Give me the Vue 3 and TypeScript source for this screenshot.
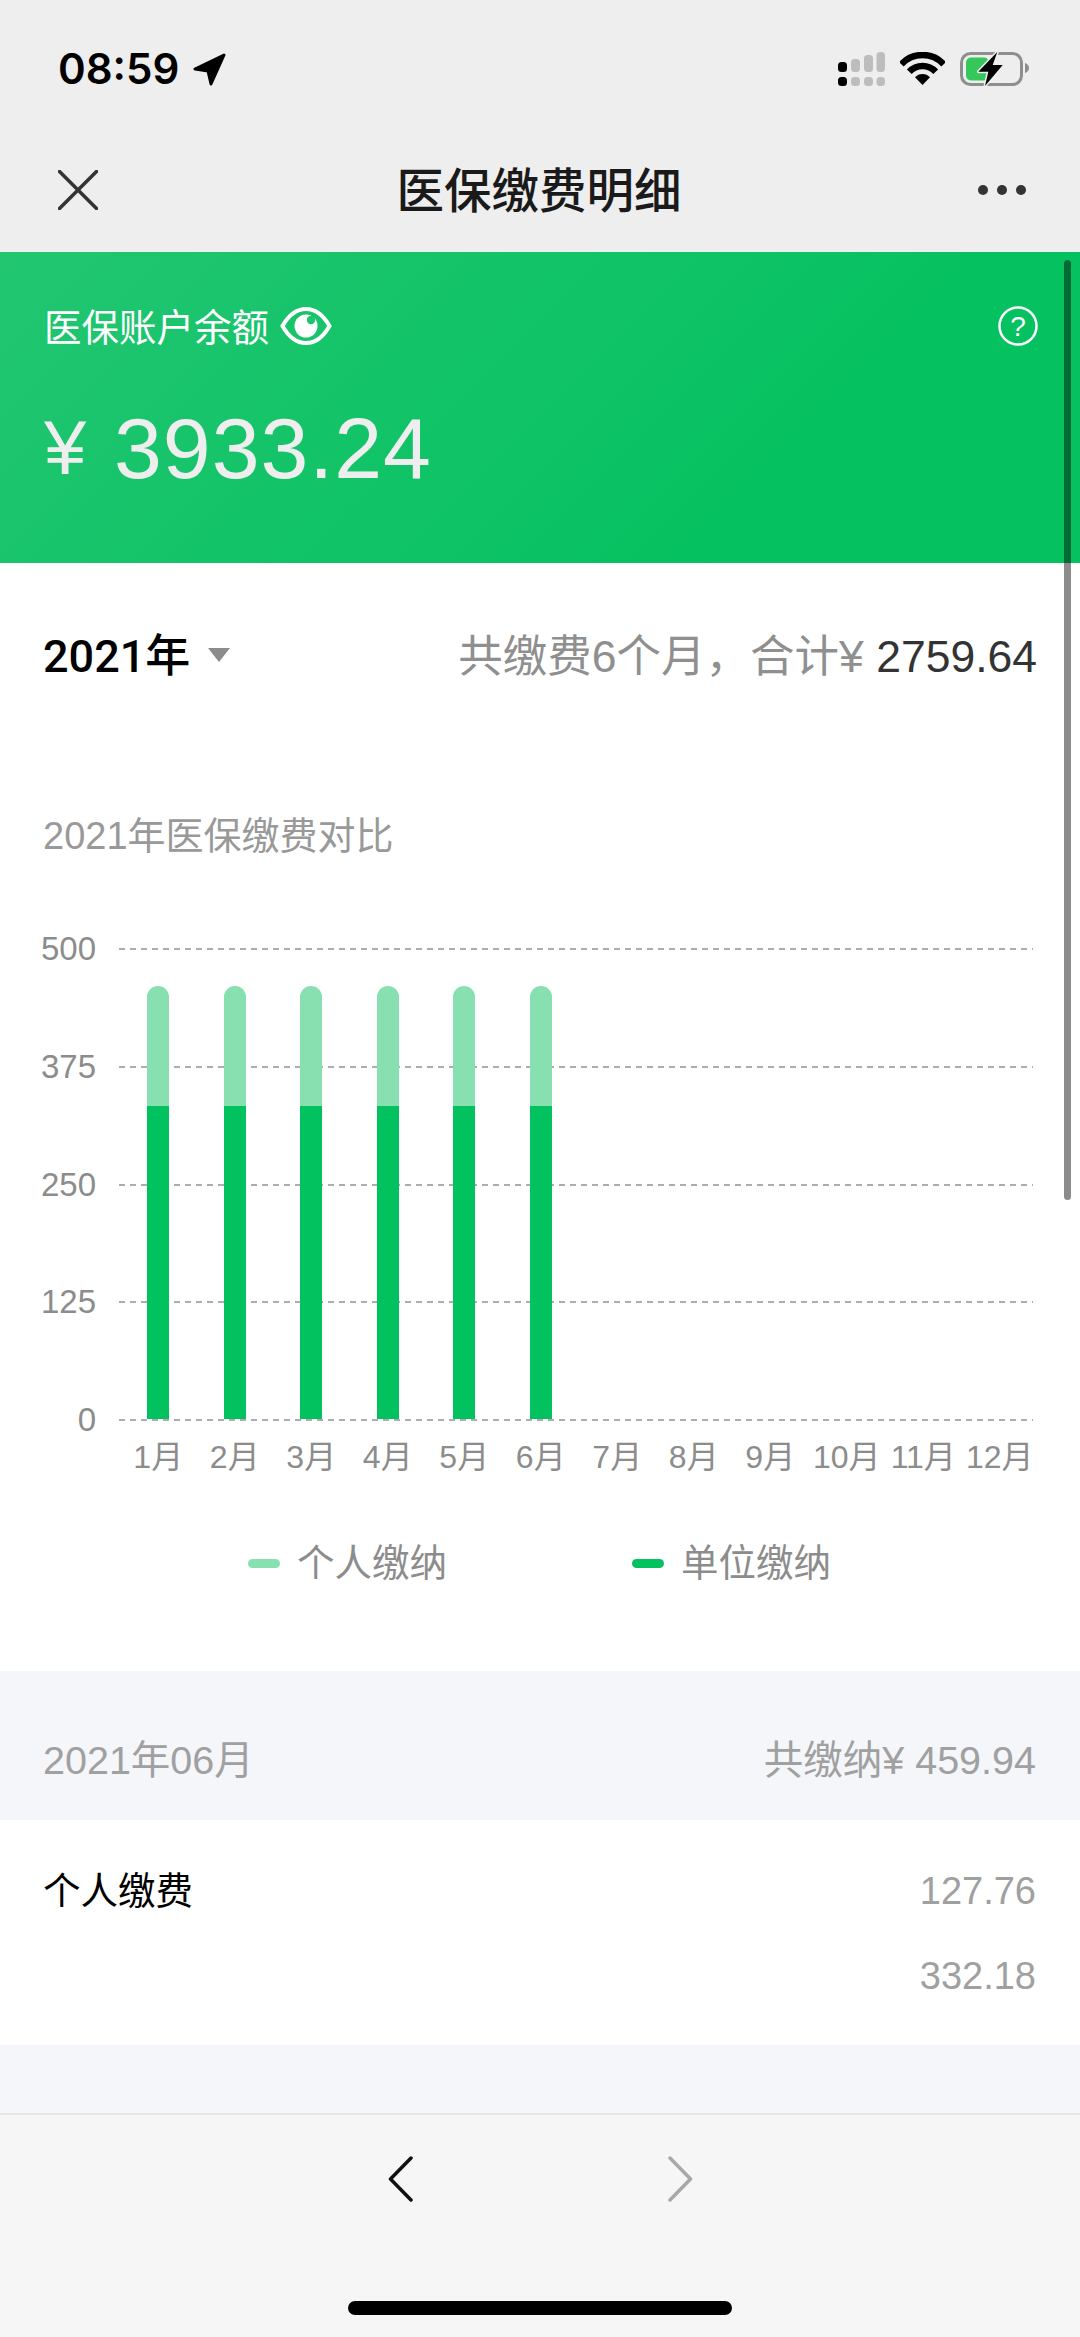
<script setup lang="ts">
interface MonthBar {
  label: string
  personal: number
  company: number
}

const maxValue = 500
const ticks: number[] = [500, 375, 250, 125, 0]
const paid: Record<number, [number, number]> = {
  1: [127.76, 332.18],
  2: [127.76, 332.18],
  3: [127.76, 332.18],
  4: [127.76, 332.18],
  5: [127.76, 332.18],
  6: [127.76, 332.18],
}
const months: MonthBar[] = Array.from({ length: 12 }, (_, i) => {
  const entry = paid[i + 1] ?? [0, 0]
  return { label: `${i + 1}月`, personal: entry[0], company: entry[1] }
})
const pct = (v: number): string => `${(v / maxValue) * 100}%`
</script>

<template>
  <div class="page">
    <header class="top">
      <div class="status">
        <div class="status-left">
          <span class="time">08:59</span>
          <svg class="arrow" width="33" height="33" viewBox="0 0 33 33">
            <path d="M31 2 2 16l13 2 3 13z" fill="#000" stroke="#000" stroke-width="3" stroke-linejoin="round" />
          </svg>
        </div>
        <div class="status-right">
          <svg width="47" height="34" viewBox="0 0 47 34">
            <rect x="0" y="10" width="9" height="10" rx="3.5" fill="#000" />
            <rect x="0" y="25" width="9" height="9" rx="3.5" fill="#000" />
            <rect x="13" y="7" width="9" height="13" rx="3.5" fill="#bdbdbd" />
            <rect x="13" y="25" width="9" height="9" rx="3.5" fill="#bdbdbd" />
            <rect x="26" y="3" width="9" height="17" rx="3.5" fill="#bdbdbd" />
            <rect x="26" y="25" width="9" height="9" rx="3.5" fill="#bdbdbd" />
            <rect x="38.5" y="0" width="8.5" height="20" rx="3.5" fill="#bdbdbd" />
            <rect x="38.5" y="25" width="8.5" height="9" rx="3.5" fill="#bdbdbd" />
          </svg>
          <svg width="45" height="34" viewBox="0 0 45 34">
            <path d="M1.3 12.2A29 29 0 0 1 43.7 12.2M9.3 19.7A18 18 0 0 1 35.7 19.7" fill="none" stroke="#000" stroke-width="6.5" />
            <path d="M22.5 33 15 25.3A10 10 0 0 1 30 25.3Z" fill="#000" />
          </svg>
          <svg width="69" height="34" viewBox="0 0 69 34" overflow="visible">
            <rect x="1.5" y="1.5" width="60" height="31" rx="9" fill="none" stroke="#8e8e8e" stroke-width="3" />
            <rect x="6" y="5.5" width="23" height="23" rx="5" fill="#34c759" />
            <path d="M65 11c2.500.8 4 2.600 4 5s-1.500 4.200-4 5z" fill="#8e8e8e" />
            <path d="M37.300 0 18.300 19.700H28.300L25 34 42.700 13H32.700Z" fill="#000" stroke="#eeeeee" stroke-width="3" paint-order="stroke" stroke-linejoin="round" />
          </svg>
        </div>
      </div>
      <nav class="nav">
        <svg class="close" width="40" height="40" viewBox="0 0 40 40">
          <path d="M1.500 1.500 38.500 38.500M38.500 1.500 1.500 38.500" stroke="#333" stroke-width="3.500" stroke-linecap="round" fill="none" />
        </svg>
        <h1 class="title">医保缴费明细</h1>
        <div class="dots"><i></i><i></i><i></i></div>
      </nav>
    </header>

    <main class="content">
      <section class="hero">
        <div class="hero-top">
          <div class="hero-label">
            <span>医保账户余额</span>
            <svg width="52" height="40" viewBox="0 0 52 40">
              <path d="M2.500 20C9 8.500 17 3 26 3s17 5.500 23.500 17C43 31.500 35 37 26 37S9 31.500 2.500 20Z" fill="none" stroke="#fff" stroke-width="4" />
              <circle cx="26" cy="20" r="11.500" fill="#fff" />
              <circle cx="31" cy="14" r="4.200" fill="#1ec56d" />
            </svg>
          </div>
          <svg class="help" width="40" height="40" viewBox="0 0 40 40">
            <circle cx="20" cy="20" r="18.500" fill="none" stroke="#fff" stroke-width="2.500" />
            <text x="20" y="30" text-anchor="middle" class="help-mark">?</text>
          </svg>
        </div>
        <div class="amount"><span class="yen">¥</span><span class="amount-value">3933.24</span></div>
      </section>

      <section class="overview">
        <div class="summary">
          <div class="year">
            <span>2021年</span>
            <i class="caret"></i>
          </div>
          <div class="total">共缴费6个月，合计¥ <b>2759.64</b></div>
        </div>

        <h2 class="chart-title">2021年医保缴费对比</h2>

        <div class="plot">
          <div class="grid">
            <div v-for="t in ticks" :key="t" class="grid-row">
              <span class="tick">{{ t }}</span>
              <span class="line"></span>
            </div>
          </div>
          <div class="bars">
            <div v-for="m in months" :key="m.label" class="bar-col">
              <div v-if="m.personal" class="bar-light" :style="{ height: pct(m.personal) }"></div>
              <div v-if="m.company" class="bar-dark" :style="{ height: pct(m.company) }"></div>
            </div>
          </div>
        </div>

        <div class="x-axis">
          <span v-for="m in months" :key="m.label">{{ m.label }}</span>
        </div>

        <div class="legend">
          <div class="legend-item"><i class="swatch light"></i>个人缴纳</div>
          <div class="legend-item"><i class="swatch dark"></i>单位缴纳</div>
        </div>
      </section>

      <section class="detail">
        <div class="detail-head">
          <span>2021年06月</span>
          <span>共缴纳¥ 459.94</span>
        </div>
        <div class="detail-body">
          <div class="detail-row">
            <span class="detail-name">个人缴费</span>
            <span>127.76</span>
          </div>
          <div class="detail-row">
            <span class="detail-name"></span>
            <span>332.18</span>
          </div>
        </div>
      </section>
    </main>

    <footer class="toolbar">
      <div class="toolbar-buttons">
        <svg width="25" height="46" viewBox="0 0 25 46">
          <path d="M23 2 2.500 23 23 44" fill="none" stroke="#111" stroke-width="3.500" stroke-linecap="round" stroke-linejoin="round" />
        </svg>
        <svg width="25" height="46" viewBox="0 0 25 46">
          <path d="M2 2 22.500 23 2 44" fill="none" stroke="#a8a8a8" stroke-width="3.500" stroke-linecap="round" stroke-linejoin="round" />
        </svg>
      </div>
      <div class="home"></div>
    </footer>

    <div class="scrollbar"></div>
  </div>
</template>

<style>
html,
body {
  margin: 0;
  padding: 0;
  background: #fff;
}
</style>

<style scoped>
.page {
  position: relative;
  display: flex;
  flex-direction: column;
  width: 1080px;
  height: 2337px;
  overflow: hidden;
  background: #f5f6fa;
  font-family: "Liberation Sans", "Noto Sans CJK SC", sans-serif;
}

.top {
  height: 252px;
  flex: none;
  background: #eeeeee;
}
.status {
  display: flex;
  justify-content: space-between;
  align-items: center;
  box-sizing: border-box;
  height: 104px;
  padding: 52px 51px 18px 58px;
}
.status-left {
  display: flex;
  align-items: center;
  gap: 14px;
}
.time {
  font-family: Inter, "Liberation Sans", sans-serif;
  font-size: 42px;
  line-height: 34px;
  font-weight: 600;
  color: #000;
}
.status-right {
  display: flex;
  align-items: center;
  gap: 15px;
}
.nav {
  display: flex;
  align-items: center;
  box-sizing: border-box;
  height: 148px;
  padding: 62px 54px 38px 58px;
}
.title {
  flex: 1;
  margin: 3px 0 0;
  padding-left: 2px;
  text-align: center;
  font-size: 47.500px;
  line-height: 48px;
  font-weight: 500;
  color: #1a1a1a;
}
.dots {
  display: flex;
  width: 48px;
  justify-content: space-between;
}
.dots i {
  width: 10px;
  height: 10px;
  border-radius: 50%;
  background: #333;
}

.content {
  flex: 1;
  display: flex;
  flex-direction: column;
  min-height: 0;
}

.hero {
  box-sizing: border-box;
  height: 311px;
  flex: none;
  padding: 52px 42px 0 44px;
  background: linear-gradient(135deg, #22c671 0%, #05c160 74%);
}
.hero-top {
  display: flex;
  justify-content: space-between;
  align-items: center;
  height: 44px;
}
.hero-label {
  display: flex;
  align-items: center;
  gap: 11px;
  font-size: 37.500px;
  line-height: 44px;
  color: #fff;
}
.hero-label span {
  position: relative;
  top: 2px;
}
.help-mark {
  font-family: "Liberation Sans", sans-serif;
  font-size: 28px;
  fill: #fff;
}
.amount {
  display: flex;
  align-items: center;
  height: 100px;
  margin-top: 50px;
  font-size: 86px;
  line-height: 100px;
  color: #eeeeee;
}
.amount-value {
  letter-spacing: 1px;
}
.yen {
  width: 70px;
  font-size: 76px;
}

.overview {
  box-sizing: border-box;
  height: 1108px;
  flex: none;
  padding-top: 59px;
  background: #fff;
}
.summary {
  display: flex;
  justify-content: space-between;
  align-items: center;
  height: 60px;
  padding: 0 43px;
}
.year {
  display: flex;
  align-items: center;
  gap: 18px;
  font-family: Roboto, "Noto Sans CJK SC", sans-serif;
  font-size: 45px;
  font-weight: 500;
  color: #000;
}
.caret {
  width: 0;
  height: 0;
  border-left: 11px solid transparent;
  border-right: 11px solid transparent;
  border-top: 14px solid #8c8c8c;
  margin-top: 6px;
}
.total {
  font-size: 44.500px;
  color: #8f8f8f;
  white-space: pre;
}
.total b {
  font-weight: 400;
  color: #333;
}
.chart-title {
  height: 50px;
  margin: 129px 0 0;
  padding-left: 43px;
  font-size: 38px;
  line-height: 50px;
  font-weight: 400;
  color: #999;
}

.plot {
  position: relative;
  height: 473px;
  margin-top: 87px;
}
.grid {
  display: flex;
  flex-direction: column;
  justify-content: space-between;
  height: 100%;
  padding-right: 47px;
}
.grid-row {
  display: flex;
  align-items: center;
  gap: 23px;
  height: 2px;
}
.tick {
  width: 96px;
  flex: none;
  text-align: right;
  font-size: 33px;
  line-height: 40px;
  color: #8c8c8c;
}
.line {
  flex: 1;
  height: 2px;
  background: repeating-linear-gradient(90deg, #adadad 0 6px, transparent 6px 11px);
}
.bars {
  position: absolute;
  left: 120px;
  top: 0;
  display: grid;
  grid-template-columns: repeat(12, 76.500px);
  height: 471px;
}
.bar-col {
  display: flex;
  flex-direction: column;
  align-items: center;
  justify-content: flex-end;
  height: 471px;
}
.bar-light,
.bar-dark {
  width: 22px;
}
.bar-light {
  border-radius: 11px 11px 0 0;
  background: #88dfb0;
}
.bar-dark {
  background: #02c25f;
}
.x-axis {
  display: grid;
  grid-template-columns: repeat(12, 76.500px);
  height: 40px;
  margin-top: 16px;
  padding-left: 120px;
  font-size: 32px;
  line-height: 40px;
  text-align: center;
  color: #8c8c8c;
}
.x-axis span {
  white-space: nowrap;
}
.legend {
  display: flex;
  gap: 185px;
  height: 50px;
  margin-top: 61px;
  padding-left: 248px;
}
.legend-item {
  display: flex;
  align-items: center;
  gap: 17px;
  font-size: 37.500px;
  line-height: 50px;
  color: #8c8c8c;
}
.swatch {
  width: 32px;
  height: 9px;
  border-radius: 4.500px;
}
.swatch.light {
  background: #88dfb0;
}
.swatch.dark {
  background: #02c25f;
}

.detail {
  flex: none;
  font-size: 38px;
  line-height: 60px;
  color: #a0a0a0;
}
.detail-head {
  display: flex;
  justify-content: space-between;
  box-sizing: border-box;
  height: 149px;
  padding: 59px 44px 0 43px;
  font-size: 39.500px;
}
.detail-body {
  display: flex;
  flex-direction: column;
  gap: 25px;
  box-sizing: border-box;
  height: 225px;
  padding: 41px 44px 0 43px;
  background: #fff;
}
.detail-row {
  display: flex;
  justify-content: space-between;
  height: 60px;
}
.detail-name {
  color: #000;
  font-size: 37.500px;
}

.toolbar {
  display: flex;
  flex-direction: column;
  align-items: center;
  box-sizing: border-box;
  height: 224px;
  flex: none;
  padding-top: 41px;
  border-top: 2px solid #e6e6e6;
  background: #f6f6f6;
}
.toolbar-buttons {
  display: flex;
  gap: 255px;
}
.home {
  width: 384px;
  height: 14px;
  margin-top: auto;
  margin-bottom: 22px;
  border-radius: 7px;
  background: #000;
}

.scrollbar {
  position: absolute;
  top: 260px;
  right: 9px;
  width: 7px;
  height: 940px;
  border-radius: 4px;
  background: rgba(0, 0, 0, 0.45);
}
</style>
